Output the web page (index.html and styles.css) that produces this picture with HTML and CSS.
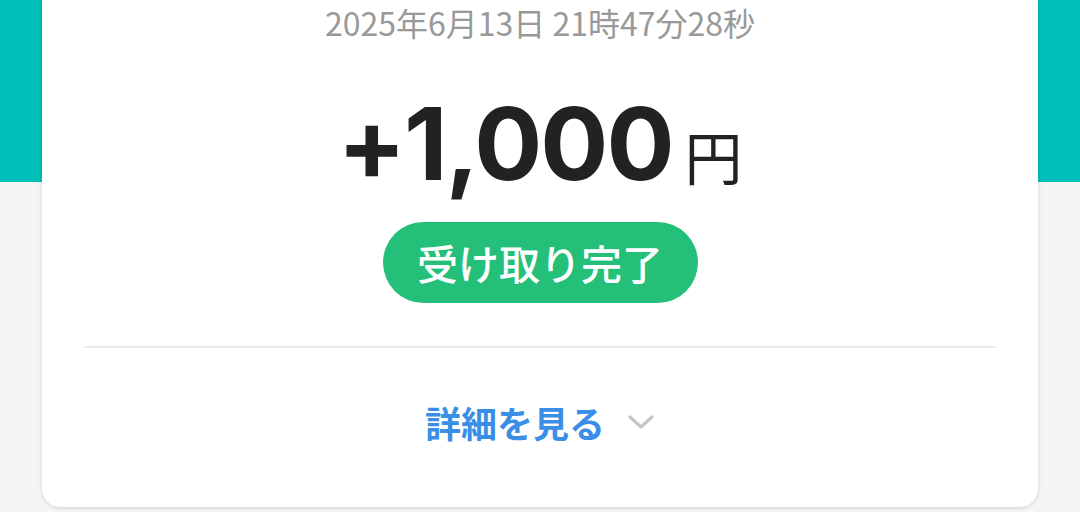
FILE: index.html
```html
<!DOCTYPE html>
<html lang="ja">
<head>
  <meta charset="UTF-8">
  <title>受け取り詳細</title>
  <link rel="stylesheet" href="styles.css">
</head>
<body>
  <div class="page">
    <div class="card">
      <p class="date">2025年6月13日 21時47分28秒</p>
      <div class="amount">
        <span class="amount-num">+1,000</span>
        <span class="amount-unit">円</span>
      </div>
      <div class="status-row">
        <span class="status">受け取り完了</span>
      </div>
      <div class="divider"></div>
      <div class="more">
        <span class="more-text">詳細を見る</span>
        <svg class="chevron" width="28" height="16" viewBox="0 0 28 16">
          <polyline points="3,3 14,13 25,3" fill="none" stroke="#c6c6c6" stroke-width="3.2" stroke-linecap="round" stroke-linejoin="round"/>
        </svg>
      </div>
    </div>
  </div>
</body>
</html>
```

FILE: styles.css
```css
html, body { margin: 0; padding: 0; }
body {
  font-family: "Noto Sans CJK JP", "Noto Sans", sans-serif;
  background: #f5f5f5;
  overflow: hidden;
}
.page {
  display: flow-root;
  height: 512px;
  padding: 0 42px;
  background: linear-gradient(#00bfb8 0, #00bfb8 182px, #f5f5f5 182px);
}
/* card continues above the visible area, so only the bottom corners are round */
.card {
  height: 507px;
  background: #fff;
  border-radius: 0 0 18px 18px;
  box-shadow: 0 1px 4px rgba(0, 0, 0, 0.14);
  padding: 0 42px;
  display: flex;
  flex-direction: column;
  align-items: center;
}
.date {
  margin: 0;
  font-size: 32px;
  line-height: 44px;
  color: #999;
}
.amount {
  margin-top: 49px;
  display: flex;
  align-items: baseline;
  color: #222;
  line-height: 1;
}
.amount-num {
  font-family: "Inter", "Noto Sans", sans-serif;
  font-weight: 700;
  font-size: 101px;
  letter-spacing: -2px;
}
.amount-unit {
  font-size: 58px;
  margin-left: 12px;
}
.status-row { margin-top: 28px; }
.status {
  display: inline-block;
  width: 315px;
  height: 81px;
  line-height: 81px;
  text-align: center;
  border-radius: 41px;
  background: #24c07a;
  color: #fff;
  font-size: 41px;
  font-weight: 500;
}
.divider {
  align-self: stretch;
  height: 2px;
  background: #ebebeb;
  margin-top: 43px;
}
.more {
  margin-top: 50px;
  display: flex;
  align-items: center;
  gap: 22px;
}
.more-text {
  font-size: 36px;
  font-weight: 700;
  color: #3a8ee6;
  line-height: 48px;
}
.chevron { display: block; }
```
